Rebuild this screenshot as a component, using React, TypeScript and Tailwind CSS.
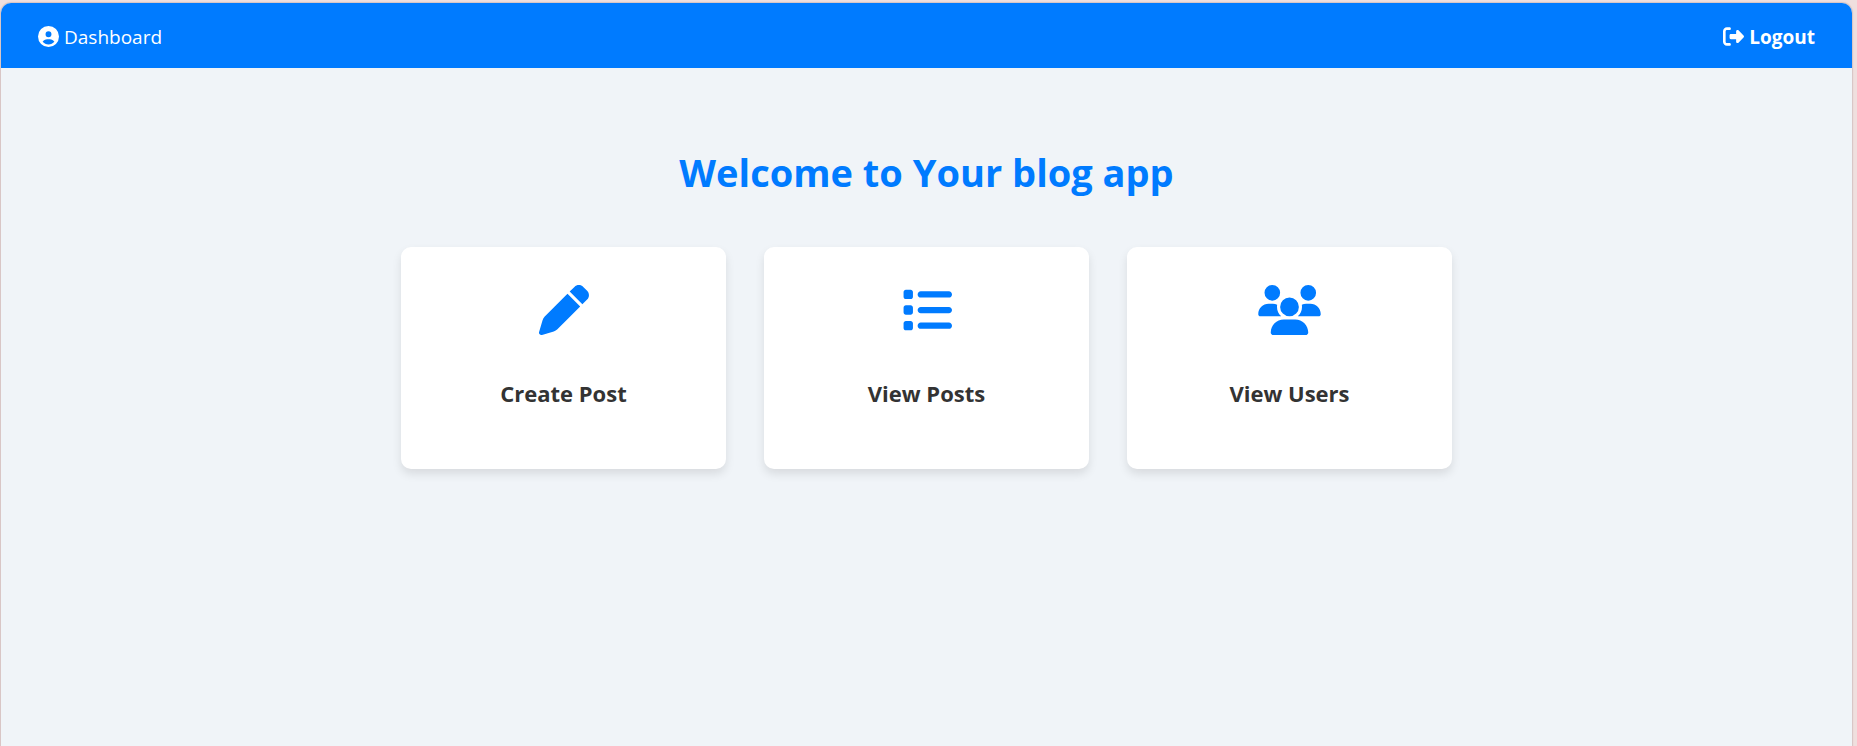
import type { IconType } from "react-icons";
import { FaCircleUser, FaList, FaPen, FaRightFromBracket, FaUsers } from "react-icons/fa6";

type Card = { title: string; href: string; icon: IconType; iconClass: string };

const cards: Card[] = [
  { title: "Create Post", href: "#create-post", icon: FaPen, iconClass: "h-[50px] w-[50px]" },
  { title: "View Posts", href: "#view-posts", icon: FaList, iconClass: "h-[50px] w-[50px]" },
  { title: "View Users", href: "#view-users", icon: FaUsers, iconClass: "h-[50px] w-[63px]" },
];

export default function App() {
  return (
    <div className="flex min-h-screen flex-col bg-[#efdfde] pt-[3px] pr-[5px] pl-px font-['Open_Sans','Noto_Sans',sans-serif]">
      <div className="flex grow flex-col overflow-hidden rounded-t-[10px] bg-[#f0f4f8] shadow-[0_0_1px_1px_rgba(120,90,90,0.2)]">
        <header className="flex h-[65px] items-center justify-between bg-[#007bff] px-[37px] pt-0.5 text-[19px] leading-7 text-white">
          <div className="flex items-center gap-[5px]">
            <FaCircleUser className="h-[21px] w-[21px]" />
            <span>Dashboard</span>
          </div>
          <a href="#logout" className="flex items-center gap-[5px] font-bold">
            <FaRightFromBracket className="h-[21px] w-[21px]" />
            <span>Logout</span>
          </a>
        </header>

        <main className="flex flex-col items-center px-6 pt-[76px]">
          <h1 className="text-center text-[38px] leading-[56px] font-bold text-[#007bff]">
            Welcome to Your blog app
          </h1>
          <div className="mt-[47px] flex flex-wrap justify-center gap-[38px]">
            {cards.map(({ title, href, icon: Icon, iconClass }) => (
              <a
                key={title}
                href={href}
                className="flex w-[325px] flex-col items-center rounded-[10px] bg-white px-6 pt-[38px] pb-[59px] shadow-[0_5px_10px_rgba(0,0,0,0.1)]"
              >
                <Icon className={`${iconClass} text-[#007bff]`} />
                <h2 className="mt-[41px] text-[22px] leading-[34px] font-bold text-[#333333]">{title}</h2>
              </a>
            ))}
          </div>
        </main>
      </div>
    </div>
  );
}
